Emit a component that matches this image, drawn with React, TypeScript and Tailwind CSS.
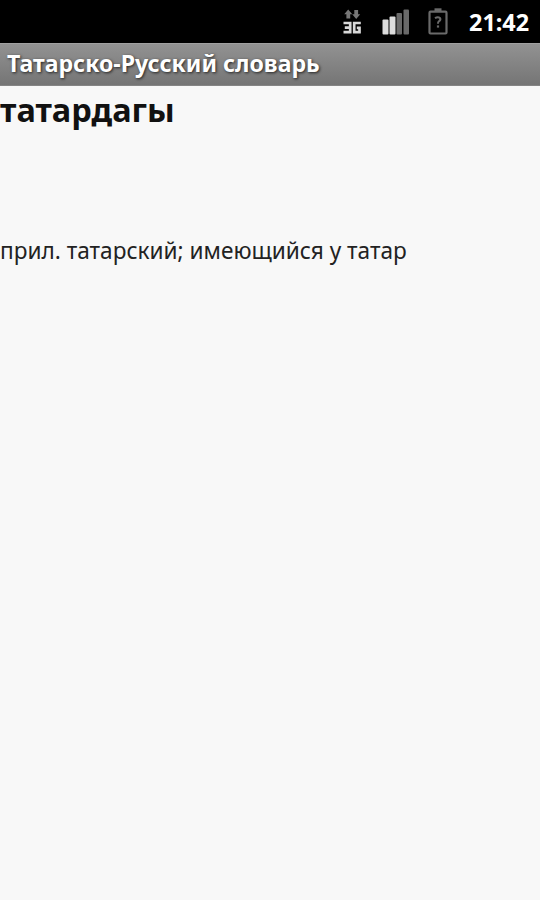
function NetworkIcon() {
  return (
    <svg width="19" height="26" viewBox="0 0 19 26">
      <g fill="#777">
        <path d="M5.2 0.5 L9.3 5.2 H7.2 V9.5 H3.4 V5.2 H1.2 Z" />
        <path d="M13.2 10 L9.2 5.2 H11.3 V1 H15.1 V5.2 H17.2 Z" />
      </g>
      <g fill="none" stroke="#d8d8d8" strokeWidth="2.7">
        <path d="M0.5 14 H7.2 V23.2 H0.5 M1.8 18.6 H7" />
        <path d="M17.8 14 H11.2 V23.2 H16.5 V18.8 H13.8" />
      </g>
    </svg>
  );
}

function SignalIcon() {
  return (
    <svg width="28" height="26" viewBox="0 0 28 26">
      <rect x="0.5" y="10.5" width="6" height="15" rx="1" fill="#dcdcdc" />
      <rect x="7.5" y="7.5" width="6" height="18" rx="1" fill="#dcdcdc" />
      <rect x="14.5" y="4" width="5.5" height="21.5" rx="1" fill="#6a6a6a" />
      <rect x="21.5" y="0.5" width="5.5" height="25" rx="1" fill="#6a6a6a" />
    </svg>
  );
}

function BatteryIcon() {
  return (
    <svg width="20" height="27" viewBox="0 0 20 27" fill="none" stroke="#6a6a6a">
      <rect x="1.5" y="3.7" width="17" height="21.8" rx="1" strokeWidth="2.2" />
      <path d="M6.5 1.8 H13.5" strokeWidth="3" />
      <path d="M7 10.2 Q9.8 8.3 12 10 Q13.2 11.9 10.7 13.5 Q10 14.1 10 15.8" strokeWidth="2" />
      <path d="M8.9 18.5 H11.1" strokeWidth="2.2" />
    </svg>
  );
}

function StatusBar() {
  return (
    <div className="flex h-[43px] items-start bg-black pl-[343px]">
      <div className="mt-[9px]">
        <NetworkIcon />
      </div>
      <div className="mt-[9px] ml-5">
        <SignalIcon />
      </div>
      <div className="mt-2 ml-[18px]">
        <BatteryIcon />
      </div>
      <span className="mt-1.5 ml-[21px] origin-left scale-x-[0.975] text-[24px] leading-8 font-bold text-white">
        21:42
      </span>
    </div>
  );
}

export default function App() {
  return (
    <div className="h-[900px] w-[540px] overflow-hidden bg-[#f8f8f8] font-['Noto_Sans','Open_Sans',sans-serif] whitespace-nowrap">
      <StatusBar />
      <header className="flex h-[43px] items-start border-t border-b border-t-[#a0a0a0] border-b-[#858585] bg-linear-to-b from-[#929292] to-[#757575] pl-[7px]">
        <span className="mt-[3px] origin-left scale-x-[0.963] text-[24px] leading-8 font-bold text-white [text-shadow:1px_1px_3px_rgba(0,0,0,0.75)]">
          Татарско-Русский словарь
        </span>
      </header>
      <main className="text-[#111]">
        <h1 className="mt-[3px] origin-left scale-x-[1.015] text-[32px] leading-[42px] font-bold">татардагы</h1>
        <p className="mt-[103px] origin-left scale-x-[0.942] text-[24px] leading-8 text-[#222]">
          прил. татарский; имеющийся у татар
        </p>
      </main>
    </div>
  );
}
